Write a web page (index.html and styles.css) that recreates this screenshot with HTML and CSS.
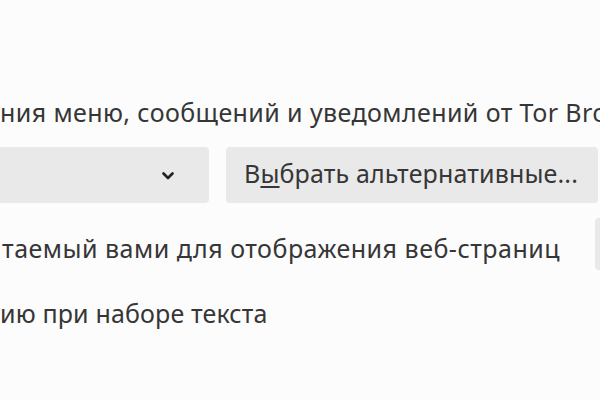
FILE: index.html
```html
<!DOCTYPE html>
<html lang="ru">
<head>
<meta charset="utf-8">
<link rel="stylesheet" href="styles.css">
</head>
<body>
<div class="page">
  <div class="line first">ния меню, сообщений и уведомлений от Tor Browser.</div>
  <div class="controls">
    <div class="select">
      <svg class="chevron" width="12" height="8" viewBox="0 0 12 8"><polyline points="1.5,1.5 6,6 10.5,1.5" fill="none" stroke="#222" stroke-width="2.6" stroke-linecap="round" stroke-linejoin="round"/></svg>
    </div>
    <div class="button">В<u>ы</u>брать альтернативные...</div>
  </div>
  <div class="row">
    <div class="line second">таемый вами для отображения веб-страниц</div>
    <div class="button side"></div>
  </div>
  <div class="line third">ию при наборе текста</div>
</div>
</body>
</html>
```
FILE: styles.css
```css
html, body {
  margin: 0;
  padding: 0;
  background: #fcfcfc;
  overflow: hidden;
  width: 600px;
  height: 400px;
}
.page {
  display: flex;
  flex-direction: column;
  font-family: "Noto Sans", "Open Sans", sans-serif;
  font-size: 25px;
  letter-spacing: 0.15px;
  color: #363636;
}
.line {
  height: 34px;
  line-height: 34px;
  white-space: nowrap;
}
.first {
  margin-top: 95px;
  letter-spacing: 0.4px;
}
.controls {
  margin-top: 18px;
  display: flex;
  gap: 17px;
  height: 56px;
}
.select {
  width: 215px;
  flex: none;
  margin-left: -6px;
  background: #e9e9e9;
  border-radius: 0 4px 4px 0;
  display: flex;
  align-items: center;
  justify-content: flex-end;
  padding-right: 35px;
  padding-top: 2px;
  box-sizing: border-box;
}
.chevron {
  display: block;
}
.button {
  background: #e9e9e9;
  border-radius: 4px;
  width: 372px;
  flex: none;
  padding-left: 18px;
  padding-bottom: 5px;
  box-sizing: border-box;
  display: flex;
  align-items: center;
  white-space: nowrap;
}
.button u {
  text-underline-offset: 3px;
}
.row {
  margin-top: 15px;
  display: flex;
  justify-content: space-between;
  align-items: flex-start;
  height: 52px;
}
.second {
  margin-top: 13px;
  margin-left: 2px;
  letter-spacing: 0.5px;
}
.side {
  width: 12px;
  height: 52px;
  margin-right: -7px;
  padding: 0;
}
.third {
  margin-top: 26px;
}
```
